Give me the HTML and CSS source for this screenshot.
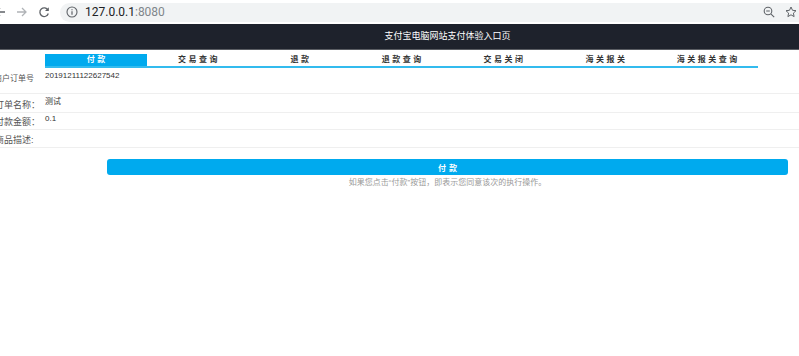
FILE: index.html
```html
<!DOCTYPE html>
<html lang="zh-CN">
<head>
    <meta charset="UTF-8">
    <title>支付宝电脑网站支付体验入口页</title>
    <link rel="stylesheet" href="styles.css">
</head>
<body>

    <!-- Browser toolbar -->
    <div class="toolbar">
        <svg class="tb-icon back" width="12" height="12" viewBox="0 0 12 12"><path d="M11 6H2M6 2L2 6l4 4" fill="none" stroke="#5f6368" stroke-width="1.3"/></svg>
        <svg class="tb-icon fwd" width="12" height="12" viewBox="0 0 12 12"><path d="M1 6h9M6 2l4 4-4 4" fill="none" stroke="#b0b3b7" stroke-width="1.3"/></svg>
        <svg class="tb-icon reload" width="12" height="12" viewBox="0 0 12 12"><path d="M10 4.2A4.3 4.3 0 1 0 10.3 7.5" fill="none" stroke="#5f6368" stroke-width="1.3"/><path d="M10.8 1.2v3.8H7z" fill="#5f6368"/></svg>
        <div class="omnibox">
            <svg class="info" width="12" height="12" viewBox="0 0 12 12"><circle cx="6" cy="6" r="5" fill="none" stroke="#5f6368" stroke-width="1.1"/><path d="M6 5.2v3.6M6 3.2v1" stroke="#5f6368" stroke-width="1.2"/></svg>
            <span class="url">127.0.0.1<span class="port">:8080</span></span>
            <svg class="zoom-icon" width="12" height="12" viewBox="0 0 12 12"><circle cx="5" cy="5" r="3.8" fill="none" stroke="#5f6368" stroke-width="1.1"/><path d="M7.8 7.8l3.4 3.4M3.2 5h3.6" stroke="#5f6368" stroke-width="1.1"/></svg>
            <svg class="star" width="12" height="12" viewBox="0 0 12 12"><path d="M6 1l1.5 3.3 3.5.4-2.6 2.4.7 3.5L6 8.8 2.9 10.6l.7-3.5L1 4.7l3.5-.4z" fill="none" stroke="#5f6368" stroke-width="1"/></svg>
        </div>
    </div>

    <div class="page">
        <!-- Header -->
        <div class="header">支付宝电脑网站支付体验入口页</div>

        <!-- Tabs -->
        <div class="tabs">
            <div class="tab active">付款</div>
            <div class="tab">交易查询</div>
            <div class="tab">退款</div>
            <div class="tab">退款查询</div>
            <div class="tab">交易关闭</div>
            <div class="tab">海关报关</div>
            <div class="tab">海关报关查询</div>
        </div>

        <!-- Pay form -->
        <div class="form">
            <div class="row row-order">
                <div class="label">商户订单号</div>
                <div class="value">20191211122627542</div>
            </div>
            <div class="row row-name">
                <div class="label">订单名称：</div>
                <div class="value">测试</div>
            </div>
            <div class="row row-amount">
                <div class="label">付款金额：</div>
                <div class="value">0.1</div>
            </div>
            <div class="row row-desc">
                <div class="label">商品描述:</div>
                <div class="value"></div>
            </div>
        </div>

        <button class="pay-button">付款</button>
        <p class="note">如果您点击“付款”按钮，即表示您同意该次的执行操作。</p>
    </div>

</body>
</html>
```

FILE: styles.css
```css
body {margin: 0;padding: 0;font-family: "Liberation Sans", "Noto Sans CJK SC", sans-serif;background: #fff;overflow: hidden;}
*, *::before, *::after {box-sizing: border-box;}

/* browser chrome */
.toolbar {height: 24px;display: flex;align-items: center;background: #fff;}
.tb-icon {flex: none;}
.tb-icon.back {margin-left: -6px;}
.tb-icon.fwd {margin-left: 10px;}
.tb-icon.reload {margin-left: 10px;}
.omnibox {flex: 1;height: 19px;margin-left: 10px;margin-right: -20px;background: #f1f3f4;border-radius: 10px;display: flex;align-items: center;padding-left: 6px;}
.omnibox .info {flex: none;}
.url {margin-left: 7px;font-family: Roboto, "Noto Sans", sans-serif;font-size: 12px;color: #202124;}
.url .port {color: #80868b;}
.zoom-icon {margin-left: auto;}
.star {margin-left: 10px;margin-right: 22px;}

/* page */
.page {width: 895px;}
.header {height: 26px;line-height: 25px;background: #1e222c;border-bottom: 1px solid #5a5d63;color: #fff;font-size: 9px;text-align: center;}
.tabs {display: flex;width: 713px;margin: 4px 0 0 45px;border-bottom: 2px solid #33bbee;}
.tab {flex: 1;height: 12px;line-height: 12px;font-size: 8px;font-weight: bold;letter-spacing: 2.5px;text-indent: 2.5px;color: #333;text-align: center;}
.tab.active {background: #00aaee;color: #fff;}

.form {margin-left: -5px;width: 900px;}
.row {display: flex;align-items: flex-start;border-bottom: 1px solid #efefef;font-size: 8px;line-height: 10px;}
.row-order {height: 26px;}
.row-name {height: 19px;}
.row-amount {height: 17px;}
.row-desc {height: 18px;}
.label {width: 50px;padding-top: 6px;font-size: 9px;color: #555;white-space: nowrap;}
.value {padding-top: 3px;color: #333;}
.row-order .label {margin-left: -1px;width: 51px;font-size: 8px;}
.row-amount .value {padding-top: 1px;}
.row-amount .label {padding-top: 4px;}
.row-desc .label {padding-top: 5px;}

.pay-button {display: block;width: 681px;height: 16px;margin: 11px 0 0 107px;padding: 0;border: none;border-radius: 3px;background: #00aaee;color: #fff;font-family: inherit;font-size: 8px;font-weight: bold;letter-spacing: 3px;text-indent: 3px;}
.note {margin: 2px 0 0;text-align: center;font-size: 8px;line-height: 12px;color: #999;}
```
